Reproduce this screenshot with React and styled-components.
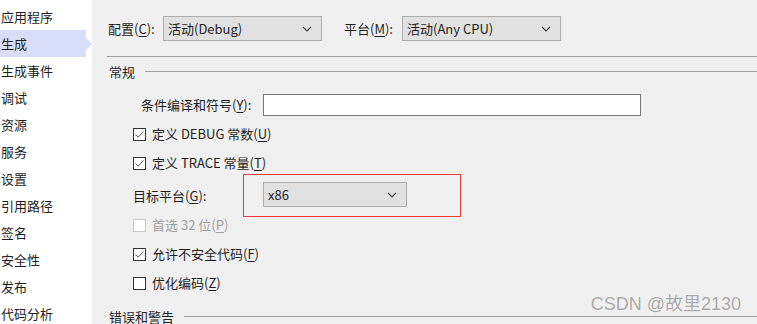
import React from 'react'
import styled, { createGlobalStyle } from 'styled-components'

const Global = createGlobalStyle`
  html, body {
    margin: 0;
    padding: 0;
    background: #f0f0f0;
  }
  body {
    font-family: "Noto Sans", "Noto Sans CJK SC", sans-serif;
    font-size: 13px;
    color: #1e1e1e;
  }
`

const Frame = styled.div`
  display: flex;
  width: 757px;
  height: 324px;
  overflow: hidden;
  position: relative;
`

const Sidebar = styled.div`
  width: 92px;
  flex: none;
  background: #ffffff;
  padding-top: 3px;
  box-sizing: border-box;
`

const NavItem = styled.div`
  position: relative;
  height: 27px;
  width: 86px;
  display: flex;
  align-items: center;
  padding-left: 1px;
  padding-bottom: 1px;
  box-sizing: border-box;
  font-family: "Noto Sans CJK SC", sans-serif;
  font-size: 13px;
  color: #1e1e1e;
  background: ${(p) => (p.$active ? '#d9def8' : 'transparent')};

  &::after {
    content: '';
    display: ${(p) => (p.$active ? 'block' : 'none')};
    position: absolute;
    right: -6px;
    top: 8px;
    border-left: 6px solid #d9def8;
    border-top: 6px solid transparent;
    border-bottom: 6px solid transparent;
  }
`

const Main = styled.div`
  flex: 1;
  background: #f0f0f0;
  padding-left: 16px;
  padding-top: 16px;
  box-sizing: border-box;
  display: flex;
  flex-direction: column;
`

const ConfigRow = styled.div`
  display: flex;
  align-items: center;
  height: 25px;
`

const Label = styled.span`
  font-family: "Noto Sans CJK SC", sans-serif;
  font-size: 13px;
  line-height: 18px;
  color: ${(p) => (p.$disabled ? '#a0a0a0' : '#1e1e1e')};
  white-space: nowrap;
  margin-left: ${(p) => p.$before || 0}px;
  width: ${(p) => (p.$w ? p.$w + 'px' : 'auto')};
  flex: none;

  u {
    text-decoration: underline;
    text-underline-offset: 2px;
  }
`

const Select = styled.div`
  width: ${(p) => p.$w}px;
  height: 25px;
  box-sizing: border-box;
  border: 1px solid #adadad;
  background: #e1e1e1;
  display: flex;
  align-items: center;
  justify-content: space-between;
  padding: 0 9px 0 4px;
  font-family: "Noto Sans CJK SC", sans-serif;
  font-size: 13px;
  color: #1e1e1e;
  flex: none;
`

const Chevron = () => (
  <svg width="10" height="6" viewBox="0 0 10 6">
    <path d="M1 1 L5 5 L9 1" fill="none" stroke="#404040" strokeWidth="1.1" />
  </svg>
)

const Divider = styled.div`
  margin-top: 15px;
  margin-left: -1px;
  height: 1px;
  background: #a0a0a0;
`

const SectionHead = styled.div`
  display: flex;
  align-items: center;
  height: 16px;
  margin-top: ${(p) => p.$top}px;
  margin-left: 1px;
  font-family: "Noto Sans CJK SC", sans-serif;
  font-size: 13px;
  color: #1e1e1e;

  &::after {
    content: '';
    flex: 1;
    height: 1px;
    background: #a0a0a0;
    margin-left: ${(p) => p.$lineGap}px;
  }
`

const Row = styled.div`
  display: flex;
  align-items: center;
  height: ${(p) => p.$h}px;
  margin-top: ${(p) => p.$top || 0}px;
  padding-left: ${(p) => p.$indent || 0}px;
`

const TextBox = styled.div`
  width: 378px;
  height: 22px;
  box-sizing: border-box;
  border: 1px solid #7a7a7a;
  background: #ffffff;
`

const Box = styled.span`
  width: 13px;
  height: 13px;
  box-sizing: border-box;
  border: 1px solid ${(p) => (p.$disabled ? '#c8c8c8' : '#333333')};
  background: #ffffff;
  display: inline-flex;
  align-items: center;
  justify-content: center;
  margin-right: 6px;
  flex: none;
`

const CheckMark = () => (
  <svg width="11" height="11" viewBox="0 0 11 11">
    <path d="M1.5 5.5 L4.2 8.2 L9.5 2.5" fill="none" stroke="#555" strokeWidth="1" />
  </svg>
)

const Highlight = styled.div`
  border: 1px solid #ec3a3a;
  height: 43px;
  width: 218px;
  box-sizing: border-box;
  padding: 7px 0 0 19px;
`

const Watermark = styled.div`
  position: absolute;
  right: 16px;
  bottom: 9px;
  font-family: "Liberation Sans", "Noto Sans CJK SC", sans-serif;
  font-size: 18px;
  color: #a8a8a8;
  text-shadow: 0 0 1px #ffffff, 0 0 1px #ffffff;
`

const navItems = [
  '应用程序',
  '生成',
  '生成事件',
  '调试',
  '资源',
  '服务',
  '设置',
  '引用路径',
  '签名',
  '安全性',
  '发布',
  '代码分析',
]

function Check({ label, checked, disabled, top }) {
  return (
    <Row $h={16} $top={top} $indent={25}>
      <Box $disabled={disabled}>{checked && <CheckMark />}</Box>
      <Label $disabled={disabled}>{label}</Label>
    </Row>
  )
}

export default function App() {
  return (
    <Frame>
      <Global />
      <Sidebar>
        {navItems.map((n) => (
          <NavItem key={n} $active={n === '生成'}>
            {n}
          </NavItem>
        ))}
      </Sidebar>
      <Main>
        <ConfigRow>
          <Label $w={55}>
            配置(<u>C</u>):
          </Label>
          <Select $w={159}>
            活动(Debug)
            <Chevron />
          </Select>
          <Label $w={58} $before={22}>
            平台(<u>M</u>):
          </Label>
          <Select $w={159}>
            活动(Any CPU)
            <Chevron />
          </Select>
        </ConfigRow>
        <Divider />
        <SectionHead $top={6} $lineGap={10}>
          常规
        </SectionHead>
        <Row $h={22} $top={15} $indent={33}>
          <Label $w={122}>
            条件编译和符号(<u>Y</u>):
          </Label>
          <TextBox />
        </Row>
        <Check label={<>定义 DEBUG 常数(<u>U</u>)</>} checked top={10} />
        <Check label={<>定义 TRACE 常量(<u>T</u>)</>} checked top={13} />
        <Row $h={43} $top={3} $indent={25}>
          <Label $w={110}>
            目标平台(<u>G</u>):
          </Label>
          <Highlight>
            <Select $w={144}>
              x86
              <Chevron />
            </Select>
          </Highlight>
        </Row>
        <Check label={<>首选 32 位(<u>P</u>)</>} disabled top={0} />
        <Check label={<>允许不安全代码(<u>F</u>)</>} checked top={13} />
        <Check label={<>优化编码(<u>Z</u>)</>} top={13} />
        <SectionHead $top={17} $lineGap={10}>
          错误和警告
        </SectionHead>
      </Main>
      <Watermark>CSDN @故里2130</Watermark>
    </Frame>
  )
}
